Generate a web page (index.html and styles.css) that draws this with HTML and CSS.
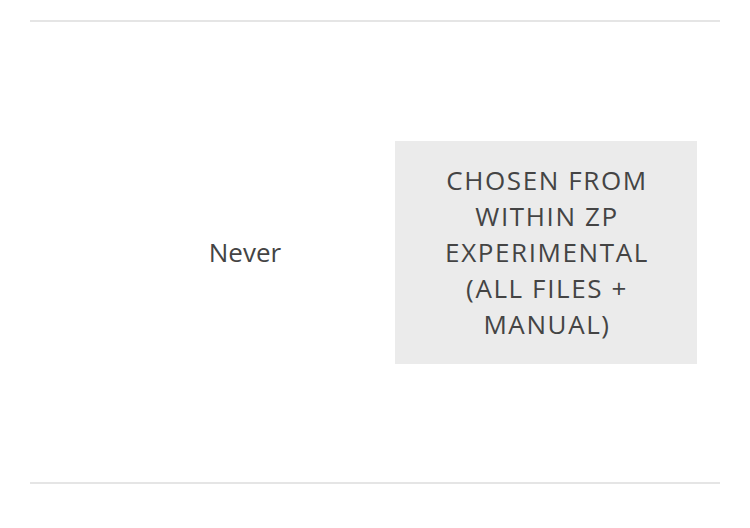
FILE: index.html
```html
<!DOCTYPE html>
<html>
<head>
<meta charset="utf-8">
<link rel="stylesheet" href="styles.css">
</head>
<body>
<div class="page">
  <div class="row">
    <div class="cell-label">Never</div>
    <div class="cell-box">CHOSEN FROM WITHIN ZP EXPERIMENTAL (ALL FILES + MANUAL)</div>
  </div>
</div>
</body>
</html>
```
FILE: styles.css
```css
html, body {
  margin: 0;
  padding: 0;
  background: #ffffff;
}
body {
  font-family: "Open Sans", "Noto Sans", "Liberation Sans", sans-serif;
  color: #444444;
  font-size: 26px;
  line-height: 36px;
}
.page {
  padding: 20px 30px 0;
}
.row {
  display: flex;
  align-items: center;
  height: 460px;
  border-top: 2px solid #e5e5e5;
  border-bottom: 2px solid #e5e5e5;
  padding-left: 65px;
}
.cell-label {
  width: 300px;
  text-align: center;
}
.cell-box {
  width: 250px;
  padding: 21px 25px 22px 27px;
  background: #ebebeb;
  text-align: center;
  text-transform: uppercase;
  letter-spacing: 1.6px;
}
```
